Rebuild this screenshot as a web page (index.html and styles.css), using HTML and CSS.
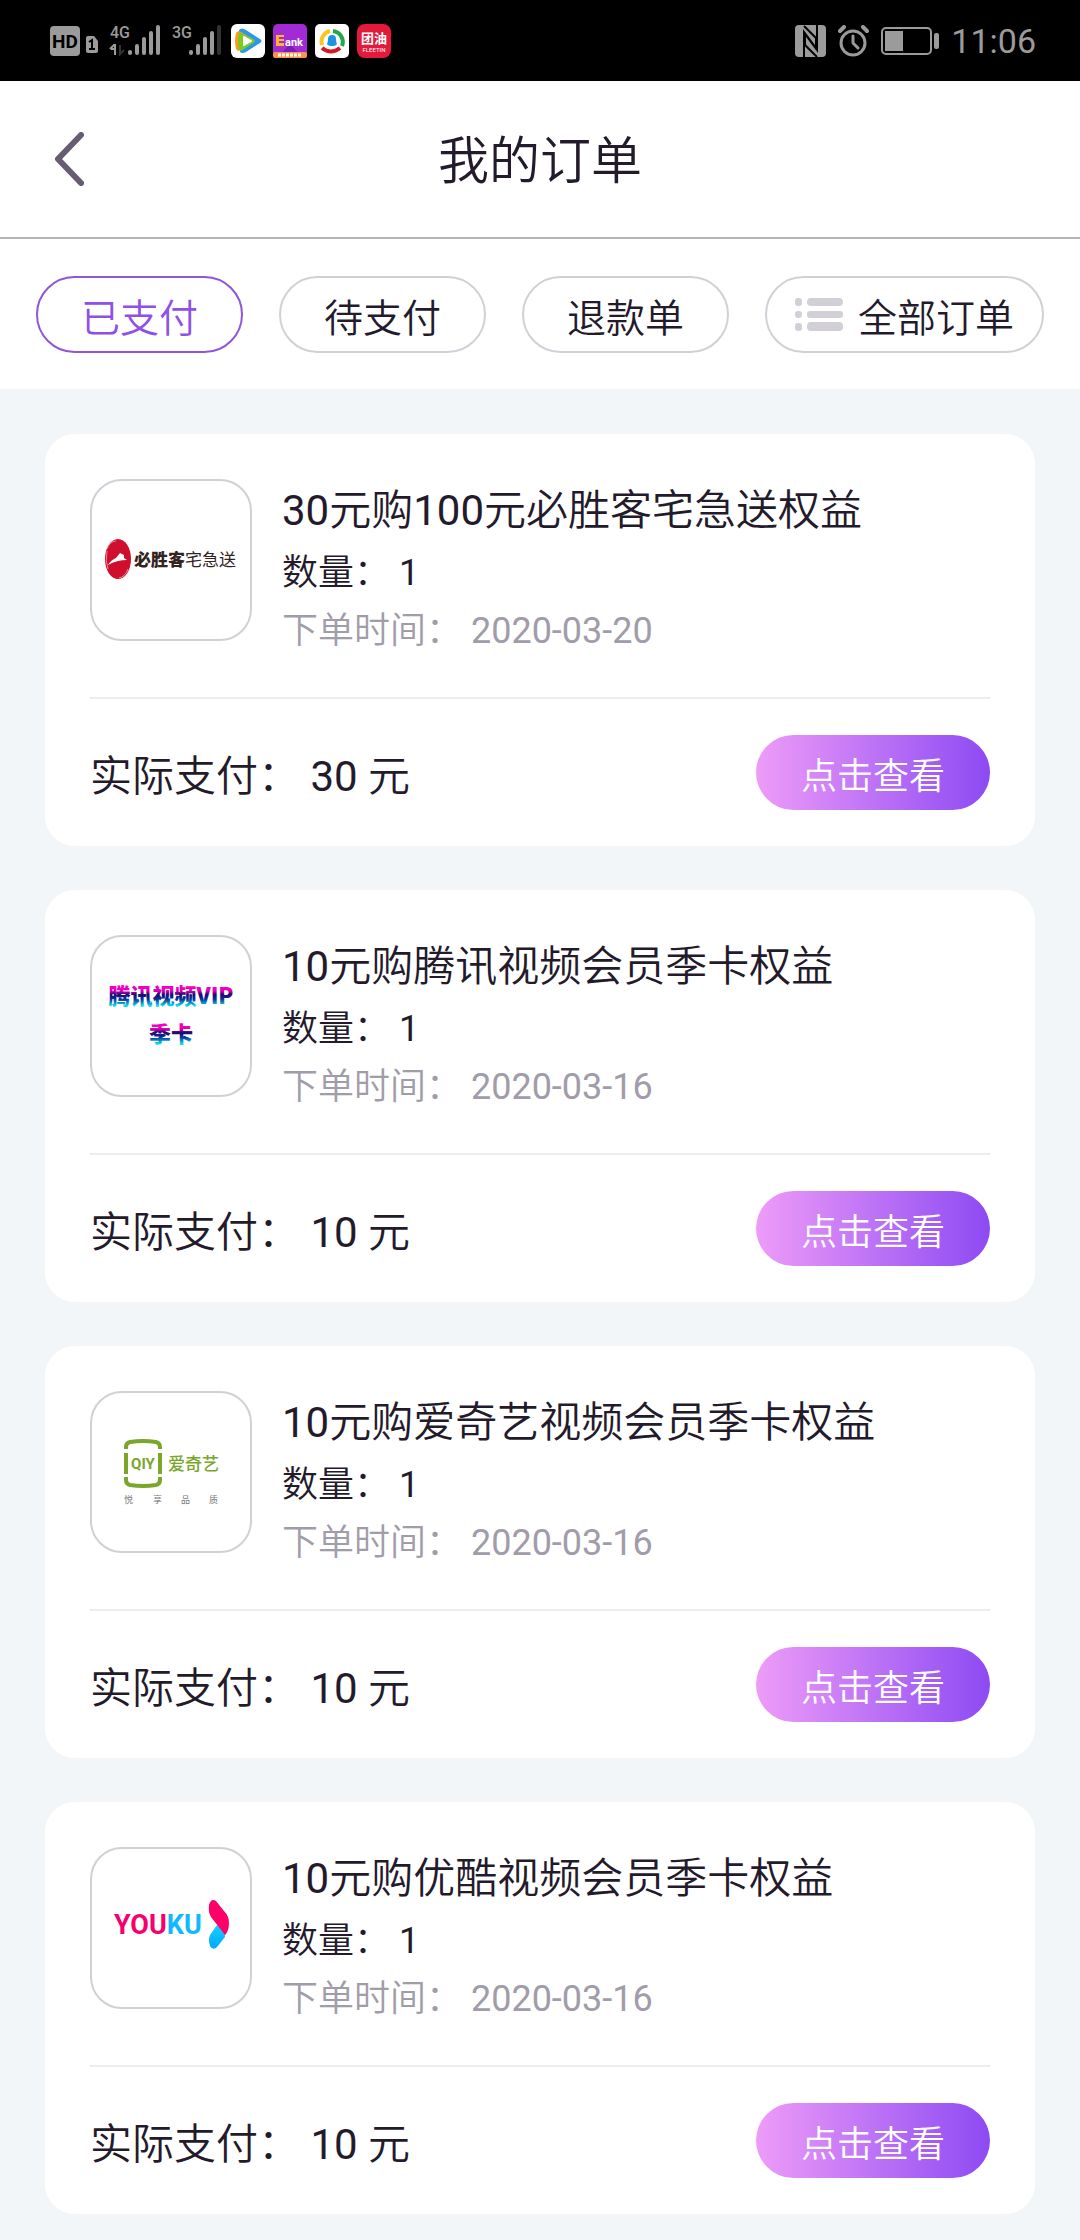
FILE: index.html
```html
<!DOCTYPE html>
<html lang="zh-CN">
<head>
<meta charset="utf-8">
<meta name="viewport" content="width=device-width, initial-scale=1">
<title>我的订单</title>
<link rel="stylesheet" href="styles.css">
</head>
<body>
<div class="status">
  <div class="status-left">
    <svg class="radio" width="175" height="42" viewBox="0 -4 175 42" aria-hidden="true">
      <rect x="0" y="2" width="30" height="30" rx="4" fill="#9b9b9b"/>
      <text x="15" y="24" class="hd" text-anchor="middle">HD</text>
      <path d="M38 12h6l4 5v10a2 2 0 0 1-2 2h-8a2 2 0 0 1-2-2V14a2 2 0 0 1 2-2z" fill="#9b9b9b"/>
      <path d="M39 18l3-2v9M39 25h6" stroke="#000" stroke-width="2" fill="none"/>
      <text x="60" y="14" class="net">4G</text>
      <path d="M60 25l4-4h1v10M61 25h3" stroke="#9b9b9b" stroke-width="2" fill="none"/>
      <path d="M70 21v9l4-4" stroke="#333" stroke-width="2" fill="none"/>
      <g stroke="#9b9b9b" stroke-width="4" stroke-linecap="round">
        <path d="M80 28v1M87 22v7M94 15v14M101 9v20M108 3v26"/>
        <path d="M141 28v1M148 22v7M155 15v14M162 9v20"/>
        <path d="M169 3v26" stroke="#333"/>
      </g>
      <text x="122" y="14" class="net">3G</text>
    </svg>
    <div class="apps">
      <svg width="34" height="34" viewBox="0 0 34 34" aria-hidden="true">
        <rect width="34" height="34" rx="6" fill="#fff"/>
        <path d="M8 6q3-3 7 0l14 9q3 2 0 4l-14 9q-4 2-6 0z" fill="#2a98e8"/>
        <path d="M5 9q2-3 5-1l12 7q3 2 0 4l-12 7q-4 2-5-1-2-8 0-16z" fill="#ff9a1e"/>
        <path d="M8 8l14 7q3 2 0 4l-12 8-2-1q-2-9 0-18z" fill="#7bcb25"/>
        <path d="M13 13l7 4-7 4z" fill="#fff" stroke="#fff" stroke-width="2" stroke-linejoin="round"/>
      </svg>
      <svg width="34" height="34" viewBox="0 0 34 34" aria-hidden="true">
        <rect width="34" height="34" rx="5" fill="#a32bd6"/>
        <path d="M4 34L17 20l13 14z" fill="#7c1cb8"/>
        <path d="M3 11h8v2H6v2h5v2H6v2h5v3H3z" fill="#ffb52b"/>
        <text x="12" y="22" class="bank">ank</text>
        <rect x="0" y="28" width="34" height="6" rx="2" fill="#ff9248"/>
        <path d="M5 31h24" stroke="#fff" stroke-width="3" stroke-dasharray="3 1"/>
      </svg>
      <svg width="34" height="34" viewBox="0 0 34 34" aria-hidden="true">
        <rect width="34" height="34" rx="5" fill="#fff"/>
        <g fill="none" stroke-width="4">
          <path d="M7 21A11 11 0 0 1 15 7" stroke="#f6c71c"/>
          <path d="M18 7A11 11 0 0 1 27 22" stroke="#22a846"/>
          <path d="M7 24Q16 31 25 24" stroke="#d8171f"/>
        </g>
        <path d="M12 20q1-2 1-5a4 4 0 0 1 8 0q0 3 1 5-1 2-5 2t-5-2z" fill="#2094dd"/>
      </svg>
      <svg width="34" height="34" viewBox="0 0 34 34" aria-hidden="true">
        <rect width="34" height="34" rx="8" fill="#e31a3c"/>
        <text x="17" y="19" class="fleet" text-anchor="middle">团油</text>
        <text x="17" y="28" class="fleet-en" text-anchor="middle">FLEETIN</text>
      </svg>
    </div>
  </div>
  <div class="status-right">
    <svg width="31" height="32" viewBox="0 0 31 32" aria-hidden="true">
      <rect width="31" height="32" rx="4" fill="#9b9b9b"/>
      <path d="M9 32V7l12 16V13L9 1M22 0v25L10 9v11l12 12" fill="none" stroke="#000" stroke-width="2"/>
    </svg>
    <svg width="31" height="32" viewBox="0 0 31 32" aria-hidden="true">
      <g fill="none" stroke="#9b9b9b" stroke-linecap="round" stroke-linejoin="round">
        <circle cx="15" cy="18" r="12" stroke-width="3"/>
        <path d="M15 11v7l5 5" stroke-width="3"/>
        <path d="M2 6l4-4M25 2l4 4" stroke-width="4"/>
      </g>
    </svg>
    <svg width="58" height="28" viewBox="0 0 58 28" aria-hidden="true">
      <rect x="1" y="1" width="49" height="26" rx="4" fill="none" stroke="#9b9b9b" stroke-width="2"/>
      <rect x="4" y="4" width="18" height="20" fill="#9b9b9b"/>
      <rect x="53" y="6" width="5" height="16" rx="2" fill="#9b9b9b"/>
    </svg>
    <time>11:06</time>
  </div>
</div>

<header class="bar">
  <button class="back" type="button" aria-label="返回">
    <svg width="30" height="54" viewBox="0 0 30 54" aria-hidden="true"><path d="M27 3L4 27l23 24" fill="none" stroke="#675d72" stroke-width="6" stroke-linecap="round" stroke-linejoin="round"/></svg>
  </button>
  <h1>我的订单</h1>
</header>

<nav class="tabs">
  <button class="tab active" type="button">已支付</button>
  <button class="tab" type="button">待支付</button>
  <button class="tab" type="button">退款单</button>
  <button class="tab" type="button">
    <svg width="48" height="33" viewBox="0 0 48 33" aria-hidden="true">
      <g fill="#d2cfd7">
        <rect x="0" y="0" width="7" height="8" rx="3"/><rect x="12" y="0" width="36" height="8" rx="4"/>
        <rect x="0" y="13" width="7" height="7" rx="3"/><rect x="12" y="13" width="36" height="7" rx="3"/>
        <rect x="0" y="25" width="7" height="8" rx="3"/><rect x="12" y="24" width="36" height="9" rx="4"/>
      </g>
    </svg>
    全部订单
  </button>
</nav>

<main class="orders">
  <article class="card">
    <div class="info">
      <svg class="logo" viewBox="0 0 158 158" role="img" aria-label="必胜客宅急送">
        <ellipse cx="26" cy="78" rx="13" ry="20" fill="#cf0f2d"/>
        <path d="M15 68q3-8 9-8M36 88q-3 8-9 9M15 70q-2 10 1 18" fill="none" stroke="#fff" stroke-opacity=".5"/>
        <path d="M16 84q3-5 8-7l4-5 4 2v3l3 2q-10 0-19 5z" fill="#fff"/>
        <text x="42" y="85" class="hut"><tspan class="heavy">必胜客</tspan>宅急送</text>
      </svg>
      <div class="lines">
        <h2>30元购100元必胜客宅急送权益</h2>
        <p class="qty">数量： 1</p>
        <p class="time">下单时间： 2020-03-20</p>
      </div>
    </div>
    <div class="pay">
      <p>实际支付： 30 元</p>
      <button class="view" type="button">点击查看</button>
    </div>
  </article>

  <article class="card">
    <div class="info">
      <svg class="logo" viewBox="0 0 158 158" role="img" aria-label="腾讯视频VIP季卡">
        <defs>
          <linearGradient id="vip" x1="0" y1="0" x2="0" y2="1">
            <stop offset=".2" stop-color="#ff00c8"/><stop offset=".4" stop-color="#e000b8"/>
            <stop offset=".52" stop-color="#1d0a70"/><stop offset=".66" stop-color="#0b2f9c"/>
            <stop offset=".86" stop-color="#12d8e6"/>
          </linearGradient>
        </defs>
        <text x="79" y="67" class="vip" text-anchor="middle" fill="url(#vip)">腾讯视频VIP</text>
        <text x="79" y="105" class="vip" text-anchor="middle" fill="url(#vip)">季卡</text>
      </svg>
      <div class="lines">
        <h2>10元购腾讯视频会员季卡权益</h2>
        <p class="qty">数量： 1</p>
        <p class="time">下单时间： 2020-03-16</p>
      </div>
    </div>
    <div class="pay">
      <p>实际支付： 10 元</p>
      <button class="view" type="button">点击查看</button>
    </div>
  </article>

  <article class="card">
    <div class="info">
      <svg class="logo" viewBox="0 0 158 158" role="img" aria-label="爱奇艺 悦享品质">
        <g fill="none" stroke="#7aa62c" stroke-width="4">
          <path d="M34 56v-2q0-4 4-5 13-2 26 0 4 1 4 5v2"/>
          <path d="M34 84v3q0 4 4 5 13 2 26 0 4-1 4-5v-3"/>
          <path d="M34 60v21M68 60v21"/>
        </g>
        <text x="51" y="76" class="qiyi" text-anchor="middle">QIY</text>
        <text x="76" y="77" class="aqy">爱奇艺</text>
        <g class="motto">
          <text x="32" y="110">悦</text><text x="61" y="110">享</text><text x="89" y="110">品</text><text x="117" y="110">质</text>
        </g>
      </svg>
      <div class="lines">
        <h2>10元购爱奇艺视频会员季卡权益</h2>
        <p class="qty">数量： 1</p>
        <p class="time">下单时间： 2020-03-16</p>
      </div>
    </div>
    <div class="pay">
      <p>实际支付： 10 元</p>
      <button class="view" type="button">点击查看</button>
    </div>
  </article>

  <article class="card">
    <div class="info">
      <svg class="logo" viewBox="0 0 158 158" role="img" aria-label="YOUKU">
        <defs>
          <linearGradient id="sky" x1="0" y1="0" x2="0" y2="1">
            <stop offset="0" stop-color="#16d0ff"/><stop offset="1" stop-color="#00a8ff"/>
          </linearGradient>
        </defs>
        <text x="22" y="85" class="youku"><tspan fill="#f5006e">YOU</tspan><tspan fill="#10b9fb">KU</tspan></text>
        <path d="M125 76q9 2 8 12l-8 10q-4 4-7-1-2-6 0-11z" fill="url(#sky)"/>
        <path d="M117 56q2-7 7-4l8 10q5 5 5 12 0 8-4 12L119 68q-3-5-2-12z" fill="#ff0068"/>
      </svg>
      <div class="lines">
        <h2>10元购优酷视频会员季卡权益</h2>
        <p class="qty">数量： 1</p>
        <p class="time">下单时间： 2020-03-16</p>
      </div>
    </div>
    <div class="pay">
      <p>实际支付： 10 元</p>
      <button class="view" type="button">点击查看</button>
    </div>
  </article>
</main>
</body>
</html>
```
FILE: styles.css
```css
* { box-sizing: border-box; }

body {
  margin: 0;
  background: #f2f6f9;
  color: #231a2c;
  font-family: Roboto, "Noto Sans CJK SC DemiLight", "Noto Sans CJK SC Light", "Noto Sans CJK SC", sans-serif;
  font-weight: 400;
}

h1, h2, p { margin: 0; font-weight: inherit; }

button {
  margin: 0;
  padding: 0;
  border: 0;
  background: none;
  color: inherit;
  font: inherit;
  cursor: pointer;
}

svg { display: block; flex: none; }

/* Status bar */
.status {
  display: flex;
  justify-content: space-between;
  align-items: center;
  height: 81px;
  padding: 0 44px 0 50px;
  background: #000;
  color: #9b9b9b;
}
.status-left, .status-right, .apps { display: flex; align-items: center; }
.status-left { gap: 6px; }
.apps { gap: 8px; }
.status-right { gap: 12px; }
.status-right time { font-size: 34px; line-height: 40px; }
.hd { font: 700 19px Roboto, sans-serif; fill: #000; }
.net { font: 500 16px Roboto, sans-serif; fill: #9b9b9b; }
.bank { font: 700 11px Roboto, sans-serif; fill: #fff; }
.fleet { font: 700 13px "Noto Sans CJK SC", sans-serif; fill: #fff; }
.fleet-en { font: 400 6px Roboto, sans-serif; fill: #fff; }

/* Title bar */
.bar {
  display: grid;
  grid-template-columns: 1fr auto 1fr;
  align-items: center;
  height: 158px;
  padding: 0 54px;
  border-bottom: 2px solid #b5b5b5;
  background: #fff;
}
.back { justify-self: start; }
.bar h1 { padding-top: 6px; font-size: 51px; line-height: 60px; }

/* Filter tabs */
.tabs {
  display: grid;
  grid-template-columns: 23fr 23fr 23fr 31fr;
  gap: 36px;
  padding: 37px 36px 36px;
  background: #fff;
}
.tab {
  display: flex;
  align-items: center;
  justify-content: center;
  gap: 15px;
  height: 77px;
  border: 2px solid #d2d0d6;
  border-radius: 39px;
  font-size: 39px;
  white-space: nowrap;
}
.tab.active { border-color: #8f55da; color: #8f50e6; }

/* Order cards */
.orders {
  display: flex;
  flex-direction: column;
  gap: 44px;
  padding: 45px 45px 26px;
}
.card {
  padding: 45px 45px 36px;
  border-radius: 30px;
  background: #fff;
}
.info {
  display: flex;
  gap: 30px;
  padding-bottom: 38px;
  border-bottom: 2px solid #ececee;
}
.logo {
  width: 162px;
  height: 162px;
  border: 2px solid #d2d0d6;
  border-radius: 32px;
}
.lines { flex: 1; min-width: 0; }
.lines h2 { font-size: 42px; line-height: 64px; }
.qty, .time { font-size: 36px; }
.qty { line-height: 60px; }
.time { line-height: 56px; color: #a19ca9; }

.pay {
  display: flex;
  align-items: center;
  justify-content: space-between;
  padding-top: 36px;
  font-size: 42px;
}
.view {
  width: 234px;
  height: 75px;
  border-radius: 38px;
  background: linear-gradient(90deg, #ee9cf8, #8d4af3);
  color: #fff;
  font-size: 36px;
}

/* Brand marks */
.hut { font: 400 17px "Noto Sans CJK SC", sans-serif; fill: #33241f; }
.heavy { font-weight: 900; }
.vip { font: 900 22px "Noto Sans CJK SC", sans-serif; }
.qiyi { font: 700 15px Roboto, sans-serif; fill: #7aa62c; }
.aqy { font: 500 17px "Noto Sans CJK SC", sans-serif; fill: #7aa62c; }
.motto { font: 400 9px "Noto Sans CJK SC", sans-serif; fill: #777; }
.youku { font: 700 27px Roboto, sans-serif; }
```
